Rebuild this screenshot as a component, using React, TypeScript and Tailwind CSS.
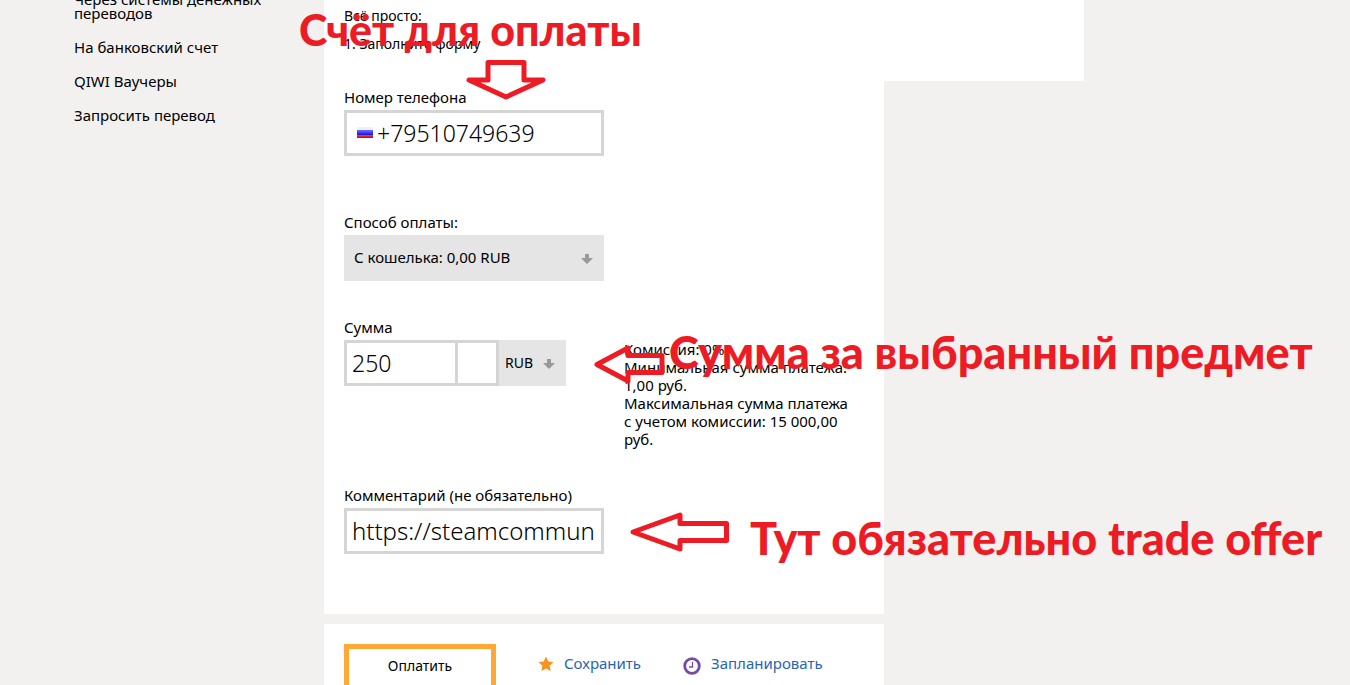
import type { ReactNode } from "react";

const navItems = [
  "Через системы денежных переводов",
  "На банковский счет",
  "QIWI Ваучеры",
  "Запросить перевод",
];

function DownArrow() {
  return (
    <svg className="mt-px" width="12" height="10" viewBox="0 0 12 10" fill="#999999" aria-hidden="true">
      <path d="M4 0h4v4h4L6 10 0 4h4z" />
    </svg>
  );
}

function Flag() {
  return (
    <svg className="shrink-0" width="16" height="13" viewBox="0 0 16 13" aria-hidden="true">
      <defs>
        <linearGradient id="flag-blue" x1="0" y1="0" x2="0" y2="1">
          <stop offset="0" stopColor="#7070ff" />
          <stop offset="1" stopColor="#1010e0" />
        </linearGradient>
        <linearGradient id="flag-red" x1="0" y1="0" x2="0" y2="1">
          <stop offset="0" stopColor="#ff4040" />
          <stop offset="1" stopColor="#c80000" />
        </linearGradient>
      </defs>
      <rect width="16" height="3" fill="#f0f0f4" />
      <rect y="3" width="16" height="5" fill="url(#flag-blue)" />
      <rect y="8" width="16" height="3" fill="url(#flag-red)" />
    </svg>
  );
}

function Note({ className, children }: { className: string; children: ReactNode }) {
  return (
    <p className={`absolute whitespace-nowrap font-[Lato,sans-serif] font-black leading-[52px] text-[#ed1c24] ${className}`}>
      {children}
    </p>
  );
}

function Annotations() {
  return (
    <div className="pointer-events-none absolute inset-0">
      <Note className="left-[299px] top-[4px] text-[43px]">Счёт для оплаты</Note>
      <Note className="left-[669px] top-[326px] text-[45px]">Сумма за выбранный предмет</Note>
      <Note className="left-[750px] top-[512px] text-[45px]">Тут обязательно trade offer</Note>
      <svg className="absolute left-[466px] top-[60px]" width="80" height="40" viewBox="0 0 80 40" fill="none" stroke="#ed1c24" strokeWidth="5" strokeLinejoin="round" aria-hidden="true">
        <path d="M22 2.500h36v17.500h19L40 37 3 20h19z" />
      </svg>
      <svg className="absolute left-[594px] top-[345px]" width="72" height="39" viewBox="0 0 72 39" fill="none" stroke="#ed1c24" strokeWidth="5" strokeLinejoin="round" aria-hidden="true">
        <path d="M3 19.500L34 3v7.500h34v17H34V36z" />
      </svg>
      <svg className="absolute left-[630px] top-[511px]" width="100" height="42" viewBox="0 0 100 42" fill="none" stroke="#ed1c24" strokeWidth="5" strokeLinejoin="round" aria-hidden="true">
        <path d="M3 21L50 4v8.500h46.500v17H50V38z" />
      </svg>
    </div>
  );
}

export default function App() {
  return (
    <div className="relative flex h-screen overflow-hidden bg-[#f3f1f0] font-['Noto_Sans',sans-serif] text-[15px] text-black">
      <nav className="-mt-2 w-[324px] shrink-0 pl-[74px] pr-[60px]">
        <ul className="flex flex-col gap-5 leading-[14px]">
          {navItems.map((item) => (
            <li key={item}>
              <a href="#">{item}</a>
            </li>
          ))}
        </ul>
      </nav>

      <main className="w-[760px] shrink-0">
        <section className="flex flex-col gap-[10px] bg-white px-5 pb-7 pt-[7px] text-sm leading-[18px]">
          <p>Всё просто:</p>
          <p>1. Заполните форму</p>
        </section>

        <form className="w-[560px]">
          <div className="bg-white px-5 pb-[60px] pt-2">
            <label htmlFor="phone" className="block leading-4">Номер телефона</label>
            <div className="mt-[5px] flex h-[46px] w-[260px] items-center gap-1 border-[3px] border-[#d5d5d5] pl-[10px]">
              <Flag />
              <input id="phone" type="tel" defaultValue="+79510749639" className="w-full min-w-0 bg-transparent text-[23px] font-light outline-none" />
            </div>

            <label htmlFor="method" className="mt-[58px] block leading-4">Способ оплаты:</label>
            <div className="relative mt-[5px] w-[260px]">
              <select id="method" className="h-[46px] w-full appearance-none bg-[#e5e5e5] px-[10px] pb-[2px] outline-none">
                <option>С кошелька: 0,00 RUB</option>
              </select>
              <span className="pointer-events-none absolute inset-y-0 right-[11px] flex items-center">
                <DownArrow />
              </span>
            </div>

            <div className="mt-[38px] flex items-start justify-between">
              <div>
                <label htmlFor="sum" className="block leading-4">Сумма</label>
                <div className="mt-[5px] flex h-[46px]">
                  <input id="sum" type="text" defaultValue="250" className="w-[114px] border-[3px] border-[#d5d5d5] bg-white px-[5px] text-[23px] font-light outline-none" />
                  <input type="text" aria-label="Копейки" className="-ml-[3px] w-[44px] border-[3px] border-[#d5d5d5] bg-white px-[5px] text-[23px] font-light outline-none" />
                  <div className="relative w-[67px]">
                    <select aria-label="Валюта" className="h-full w-full appearance-none bg-[#e5e5e5] pl-[6px] text-sm outline-none">
                      <option>RUB</option>
                    </select>
                    <span className="pointer-events-none absolute inset-y-0 right-[11px] flex items-center">
                      <DownArrow />
                    </span>
                  </div>
                </div>
              </div>
              <div className="w-[240px] pt-[21px] leading-[18px]">
                <p>Комиссия: 0%</p>
                <p>Минимальная сумма платежа:<br />1,00 руб.</p>
                <p>Максимальная сумма платежа<br />с учетом комиссии: 15 000,00<br />руб.</p>
              </div>
            </div>

            <label htmlFor="comment" className="mt-[39px] block leading-4">Комментарий (не обязательно)</label>
            <input id="comment" type="text" defaultValue="https://steamcommun" className="mt-[5px] block h-[46px] w-[260px] border-[3px] border-[#d5d5d5] bg-white pb-[2px] pl-[5px] text-2xl font-light outline-none" />
          </div>

          <div className="mt-[10px] flex items-start bg-white p-5 text-[#2864b4]">
            <button type="button" className="h-[46px] w-[152px] border-[5px] border-[#ffa834] pb-[2px] text-sm text-black">Оплатить</button>
            <a href="#" className="ml-[42px] flex h-[38px] items-center gap-[10px]">
              <svg className="mt-px" width="16" height="16" viewBox="0 0 16 16" fill="#f7931e" aria-hidden="true">
                <path d="M8 .5l2.300 5 5.200.600-3.900 3.700 1.100 5.200L8 12.400 3.300 15l1.100-5.200L.5 6.100l5.200-.600z" />
              </svg>
              Сохранить
            </a>
            <a href="#" className="ml-[42px] flex h-[38px] items-center gap-[10px]">
              <svg className="mt-[6px]" width="18" height="18" viewBox="0 0 18 18" fill="none" stroke="#744da0" aria-hidden="true">
                <circle cx="9" cy="9" r="7.300" strokeWidth="2.800" />
                <path d="M9.500 5v5H6" strokeWidth="1.300" />
              </svg>
              Запланировать
            </a>
          </div>
        </form>
      </main>

      <Annotations />
    </div>
  );
}
